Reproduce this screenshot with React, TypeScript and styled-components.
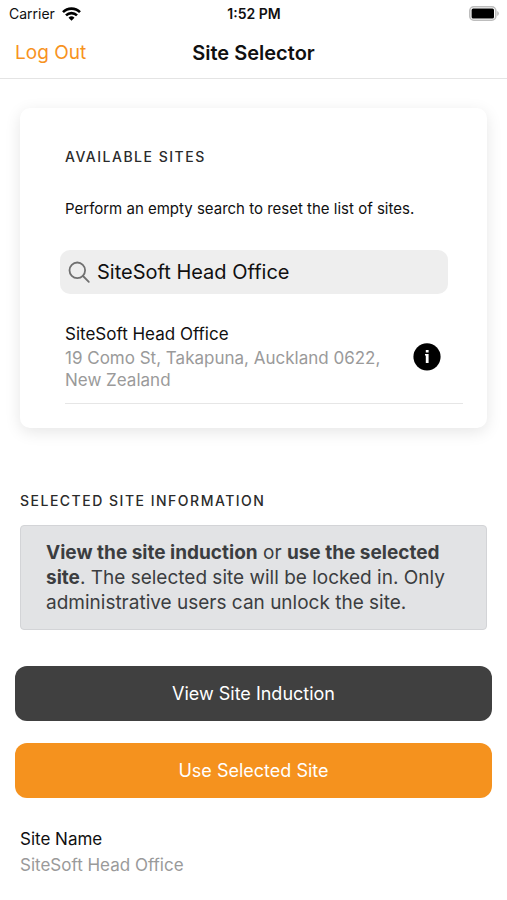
import React, { useState } from "react";
import styled, { createGlobalStyle } from "styled-components";

const Global = createGlobalStyle`
  *, *::before, *::after { box-sizing: border-box; }
  body {
    margin: 0;
    background: #fff;
    color: #101010;
    font-family: Inter, "Liberation Sans", sans-serif;
    -webkit-font-smoothing: antialiased;
  }
  h1, h2, h3, p, dl, dt, dd { margin: 0; padding: 0; }
  button, input { font: inherit; }
`;

const StatusBar = styled.div`
  display: grid;
  grid-template-columns: 1fr auto 1fr;
  align-items: center;
  height: 27px;
  padding: 0 8px 0 9px;
  font-size: 14px;
  line-height: 20px;
`;

const Carrier = styled.div`
  display: flex;
  align-items: center;
  gap: 7px;
`;

const Clock = styled.time`
  font-weight: 600;
`;

const Battery = styled.svg`
  justify-self: end;
`;

const NavBar = styled.header`
  display: grid;
  grid-template-columns: 1fr auto 1fr;
  align-items: center;
  height: 52px;
  padding: 0 15px;
  border-bottom: 1px solid #e4e4e4;
`;

const LogOut = styled.button`
  justify-self: start;
  padding: 0;
  border: 0;
  background: none;
  color: #f7931e;
  font-size: 19px;
  line-height: 24px;
  cursor: pointer;
`;

const Title = styled.h1`
  font-size: 20px;
  line-height: 24px;
  font-weight: 600;
`;

const Card = styled.section`
  margin: 29px 20px 0;
  padding: 39px 24px 24px 45px;
  border-radius: 10px;
  background: #fff;
  box-shadow: 0 4px 16px rgba(0, 0, 0, 0.1);
`;

const SectionTitle = styled.h2`
  color: #2b2b2b;
  font-size: 14px;
  line-height: 20px;
  font-weight: 500;
  letter-spacing: 1.5px;
  text-transform: uppercase;
`;

const Hint = styled.p`
  margin-top: 31px;
  font-size: 15px;
  line-height: 22px;
`;

const SearchBox = styled.label`
  display: flex;
  align-items: center;
  gap: 6px;
  height: 44px;
  margin: 30px 15px 0 -5px;
  padding: 0 8px;
  border-radius: 10px;
  background: #eeeeee;
`;

const SearchInput = styled.input`
  flex: 1;
  min-width: 0;
  padding: 0;
  border: 0;
  outline: 0;
  background: none;
  color: #101010;
  font-size: 20px;
  line-height: 28px;
`;

const SiteRow = styled.div`
  display: flex;
  align-items: center;
  justify-content: space-between;
  margin-top: 28px;
  padding: 0 22px 12px 0;
  border-bottom: 1px solid #e6e6e6;
`;

const SiteName = styled.h3`
  font-size: 17px;
  line-height: 25px;
  font-weight: 400;
`;

const Address = styled.p`
  max-width: 320px;
  color: #9a9a9a;
  font-size: 17px;
  line-height: 22px;
`;

const InfoButton = styled.button`
  display: flex;
  padding: 0;
  border: 0;
  background: none;
  cursor: pointer;
`;

const Selected = styled.section`
  padding: 63px 20px 24px;
`;

const Notice = styled.p`
  margin-top: 14px;
  padding: 14px 25px;
  border: 1px solid #d3d4d7;
  border-radius: 4px;
  background: #e2e3e5;
  color: #3b3d40;
  font-size: 19px;
  line-height: 25px;
`;

const Actions = styled.div`
  display: grid;
  gap: 22px;
  margin: 36px -5px 0;
`;

const ActionButton = styled.button<{ $primary?: boolean }>`
  height: 55px;
  border: 0;
  border-radius: 12px;
  background: ${({ $primary }) => ($primary ? "#f5921e" : "#404040")};
  color: #fff;
  font-size: 18px;
  cursor: pointer;
`;

const Details = styled.dl`
  margin-top: 28px;
  font-size: 17px;
  line-height: 26px;
`;

const DetailValue = styled.dd`
  color: #9a9a9a;
`;

export default function App() {
  const [query, setQuery] = useState("SiteSoft Head Office");
  return (
    <>
      <Global />
      <StatusBar>
        <Carrier>
          Carrier
          <svg width="19" height="14" viewBox="0 0 19 14" aria-hidden="true">
            <g fill="none" stroke="#000" strokeWidth="2.6">
              <path d="M1 5.2a12 12 0 0 1 17 0" />
              <path d="M4 8.4a7.8 7.8 0 0 1 11 0" />
            </g>
            <path d="M9.5 13.8l-3-3.1a4.3 4.3 0 0 1 6 0z" />
          </svg>
        </Carrier>
        <Clock>1:52 PM</Clock>
        <Battery width="30" height="15" viewBox="0 0 30 15" role="img" aria-label="Battery full">
          <rect x="0.8" y="0.8" width="26" height="13.4" rx="4" fill="none" stroke="#bdbdbd" strokeWidth="1.6" />
          <rect x="2.6" y="2.6" width="22.4" height="9.8" rx="1.5" />
          <path d="M28.2 5a2.7 2.7 0 0 1 0 5z" fill="#bdbdbd" />
        </Battery>
      </StatusBar>
      <NavBar>
        <LogOut type="button">Log Out</LogOut>
        <Title>Site Selector</Title>
      </NavBar>
      <main>
        <Card>
          <SectionTitle>Available Sites</SectionTitle>
          <Hint>Perform an empty search to reset the list of sites.</Hint>
          <SearchBox>
            <svg width="23" height="23" viewBox="0 0 23 23" fill="none" stroke="#707070" strokeWidth="1.8" strokeLinecap="round" aria-hidden="true">
              <circle cx="9.3" cy="9.3" r="7.8" />
              <path d="M15 15l5.8 5.8" />
            </svg>
            <SearchInput aria-label="Search sites" value={query} onChange={(e) => setQuery(e.target.value)} />
          </SearchBox>
          <SiteRow>
            <div>
              <SiteName>SiteSoft Head Office</SiteName>
              <Address>19 Como St, Takapuna, Auckland 0622, New Zealand</Address>
            </div>
            <InfoButton type="button" aria-label="Site details">
              <svg width="28" height="28" viewBox="0 0 28 28" aria-hidden="true">
                <circle cx="14" cy="13.8" r="13.6" />
                <path fill="#fff" d="M12.8 7h2.8v2.5h-2.8zM12 11h3.6v9h-2.8v-7.6H12z" />
              </svg>
            </InfoButton>
          </SiteRow>
        </Card>
        <Selected>
          <SectionTitle>Selected Site Information</SectionTitle>
          <Notice>
            <strong>View the site induction</strong> or <strong>use the selected site</strong>. The selected site will be
            locked in. Only administrative users can unlock the site.
          </Notice>
          <Actions>
            <ActionButton type="button">View Site Induction</ActionButton>
            <ActionButton type="button" $primary>
              Use Selected Site
            </ActionButton>
          </Actions>
          <Details>
            <dt>Site Name</dt>
            <DetailValue>SiteSoft Head Office</DetailValue>
          </Details>
        </Selected>
      </main>
    </>
  );
}
